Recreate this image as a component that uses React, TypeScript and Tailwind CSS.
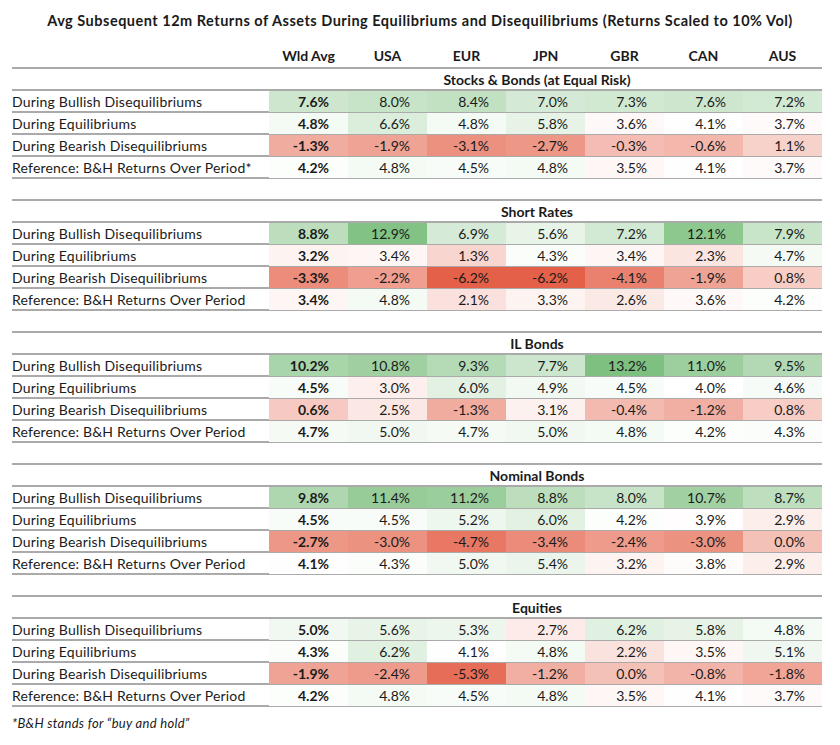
const columns = ["Wld Avg", "USA", "EUR", "JPN", "GBR", "CAN", "AUS"];

const rowLabels = [
  "During Bullish Disequilibriums",
  "During Equilibriums",
  "During Bearish Disequilibriums",
  "Reference: B&H Returns Over Period",
];

const sections = [
  {
    name: "Stocks & Bonds (at Equal Risk)",
    star: true,
    rows: [
      [7.6, 8.0, 8.4, 7.0, 7.3, 7.6, 7.2],
      [4.8, 6.6, 4.8, 5.8, 3.6, 4.1, 3.7],
      [-1.3, -1.9, -3.1, -2.7, -0.3, -0.6, 1.1],
      [4.2, 4.8, 4.5, 4.8, 3.5, 4.1, 3.7],
    ],
  },
  {
    name: "Short Rates",
    rows: [
      [8.8, 12.9, 6.9, 5.6, 7.2, 12.1, 7.9],
      [3.2, 3.4, 1.3, 4.3, 3.4, 2.3, 4.7],
      [-3.3, -2.2, -6.2, -6.2, -4.1, -1.9, 0.8],
      [3.4, 4.8, 2.1, 3.3, 2.6, 3.6, 4.2],
    ],
  },
  {
    name: "IL Bonds",
    rows: [
      [10.2, 10.8, 9.3, 7.7, 13.2, 11.0, 9.5],
      [4.5, 3.0, 6.0, 4.9, 4.5, 4.0, 4.6],
      [0.6, 2.5, -1.3, 3.1, -0.4, -1.2, 0.8],
      [4.7, 5.0, 4.7, 5.0, 4.8, 4.2, 4.3],
    ],
  },
  {
    name: "Nominal Bonds",
    rows: [
      [9.8, 11.4, 11.2, 8.8, 8.0, 10.7, 8.7],
      [4.5, 4.5, 5.2, 6.0, 4.2, 3.9, 2.9],
      [-2.7, -3.0, -4.7, -3.4, -2.4, -3.0, 0.0],
      [4.1, 4.3, 5.0, 5.4, 3.2, 3.8, 2.9],
    ],
  },
  {
    name: "Equities",
    rows: [
      [5.0, 5.6, 5.3, 2.7, 6.2, 5.8, 4.8],
      [4.3, 6.2, 4.1, 4.8, 2.2, 3.5, 5.1],
      [-1.9, -2.4, -5.3, -1.2, 0.0, -0.8, -1.8],
      [4.2, 4.8, 4.5, 4.8, 3.5, 4.1, 3.7],
    ],
  },
];

// diverging heat scale: red at the low end, white around 4%, green at the top
function cellBg(v: number) {
  const mid = 4.0;
  let t: number;
  let to: number[];
  if (v >= mid) {
    t = Math.min(1, (v - mid) / (13.2 - mid));
    to = [126, 192, 128];
  } else {
    t = Math.min(1, (mid - v) / (mid + 6.2));
    to = [228, 96, 72];
  }
  const c = to.map((x) => Math.round(255 + (x - 255) * t));
  return `rgb(${c[0]}, ${c[1]}, ${c[2]})`;
}

function HeaderRow() {
  return (
    <div className="grid h-[25px] grid-cols-[257px_repeat(7,79px)] border-b-2 border-[#aaaaaa] pt-[4px] text-[14px] font-bold leading-[16px]">
      <div />
      {columns.map((c) => (
        <div key={c} className="text-center">
          {c}
        </div>
      ))}
    </div>
  );
}

function SectionTitle(props: { name: string }) {
  return (
    <div className="flex h-[22px] border-b-2 border-[#aaaaaa]">
      <div className="ml-[240px] flex w-[570px] items-center justify-center text-[14px] font-bold">
        {props.name}
      </div>
    </div>
  );
}

interface DRProps {
  label: string;
  values: number[];
}

function DataRow(props: DRProps) {
  return (
    <div className="grid h-[22px] grid-cols-[257px_repeat(7,79px)] border-b-2 border-[#aaaaaa] text-[14px]">
      <div className="flex items-center tracking-[0.2px]">{props.label}</div>
      {props.values.map((v, i) => (
        <div
          key={i}
          className={
            "flex items-center justify-end " +
            (i === 0 ? "pr-[19px] font-bold" : "pr-[17px]")
          }
          style={{ backgroundColor: cellBg(v) }}
        >
          {v.toFixed(1)}%
        </div>
      ))}
    </div>
  );
}

export default function App() {
  return (
    <div className="h-[745px] w-[840px] bg-white font-['Lato','Open_Sans',sans-serif] text-[#1a1a1a]">
      <div className="pt-[12px] text-center text-[14.5px] font-bold leading-[18px] tracking-[0.5px]">
        Avg Subsequent 12m Returns of Assets During Equilibriums and
        Disequilibriums (Returns Scaled to 10% Vol)
      </div>
      <div className="ml-[12px] mt-[14px] w-[810px]">
        <HeaderRow />
        {sections.map((s, si) => (
          <div key={s.name}>
            {si > 0 ? (
              <div className="h-[22px] border-b-2 border-[#aaaaaa]" />
            ) : null}
            <SectionTitle name={s.name} />
            {s.rows.map((vals, ri) => (
              <DataRow
                key={ri}
                label={rowLabels[ri] + (s.star && ri === 3 ? "*" : "")}
                values={vals}
              />
            ))}
          </div>
        ))}
        <div className="mt-[7px] text-[13px] italic tracking-[0.3px]">
          *B&amp;H stands for “buy and hold”
        </div>
      </div>
    </div>
  );
}
